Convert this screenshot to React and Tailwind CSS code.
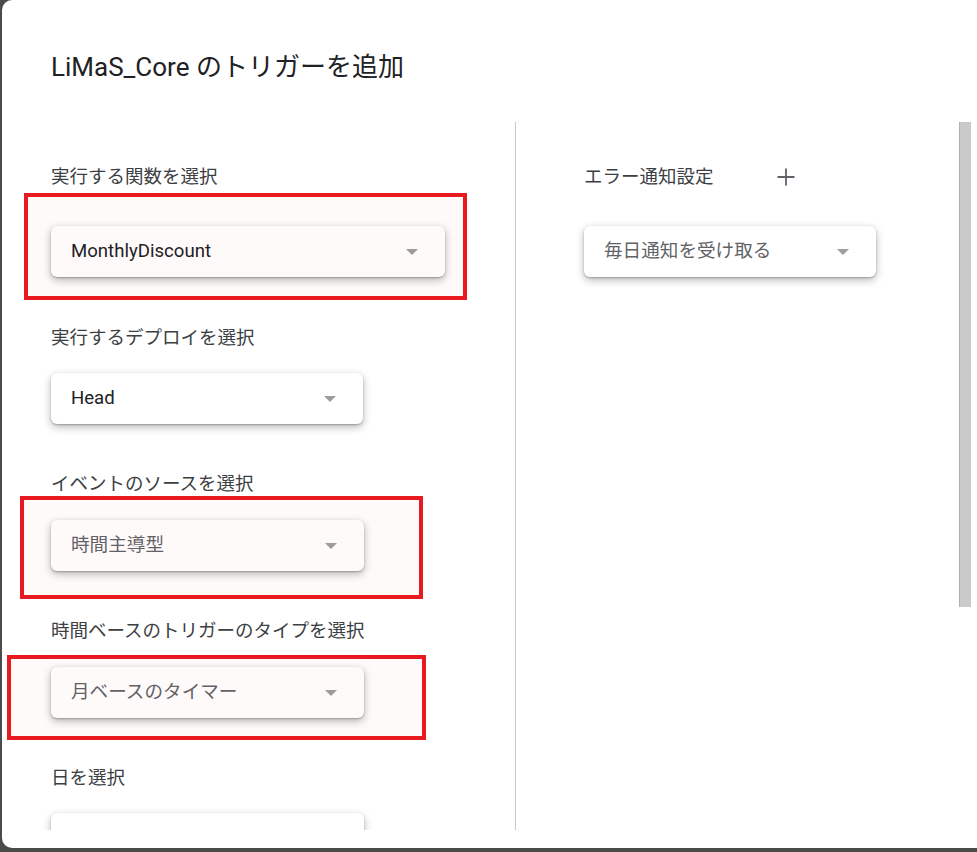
import React from "react";

const font = { fontFamily: 'Roboto, "Noto Sans CJK JP", sans-serif' };

const Select = ({ value, width, muted }) => (
  <div
    className={`${width} h-[51px] flex items-center justify-between pl-[20px] pr-[27px] bg-white rounded-[6px] shadow-[0_1px_2px_rgba(0,0,0,0.25),0_3px_8px_rgba(0,0,0,0.28)]`}
  >
    <span className={`text-[18.6px] ${muted ? "text-[#5f6368]" : "text-[#202124]"}`}>{value}</span>
    <svg width="12" height="6" viewBox="0 0 12 6">
      <path d="M0 0h12L6 6z" fill="#9e9e9e" />
    </svg>
  </div>
);

const Label = ({ children }) => (
  <div className="text-[18.5px] leading-[24px] text-[#3c4043]">{children}</div>
);

const App = () => {
  return (
    <div className="relative w-full h-[852px] bg-[#4b4b4b] pl-[2px] pb-[4px] overflow-hidden" style={font}>
      <div className="h-full bg-white rounded-l-[10px] flex flex-col">
        {/* header */}
        <div className="h-[120px] pl-[49px] pt-[51px]">
          <h1 className="text-[26px] leading-[32px] text-[#202124]">LiMaS_Core のトリガーを追加</h1>
        </div>

        {/* body */}
        <div className="flex h-[710px] overflow-hidden">
          <div className="w-[514px] border-r border-[#c8c8c8] pl-[49px] pt-[43px] mt-[2px]">
            <Label>実行する関数を選択</Label>
            <div className="mt-[37px]">
              <Select value="MonthlyDiscount" width="w-[394px]" />
            </div>

            <div className="mt-[49px]">
              <Label>実行するデプロイを選択</Label>
            </div>
            <div className="mt-[23px]">
              <Select value="Head" width="w-[312px]" />
            </div>

            <div className="mt-[48px]">
              <Label>イベントのソースを選択</Label>
            </div>
            <div className="mt-[24px]">
              <Select value="時間主導型" width="w-[313px]" muted />
            </div>

            <div className="mt-[48px]">
              <Label>時間ベースのトリガーのタイプを選択</Label>
            </div>
            <div className="mt-[24px]">
              <Select value="月ベースのタイマー" width="w-[313px]" muted />
            </div>

            <div className="mt-[48px]">
              <Label>日を選択</Label>
            </div>
            <div className="mt-[23px]">
              <Select value="" width="w-[313px]" />
            </div>
          </div>

          <div className="flex-1 flex mt-[2px]">
            <div className="flex-1 pl-[68px] pt-[43px]">
              <div className="flex items-center">
                <Label>エラー通知設定</Label>
                <svg className="ml-[62px]" width="20" height="20" viewBox="0 0 20 20">
                  <path d="M10 1.5v17M1.5 10h17" stroke="#5f6368" strokeWidth="1.8" />
                </svg>
              </div>
              <div className="mt-[37px]">
                <Select value="毎日通知を受け取る" width="w-[292px]" muted />
              </div>
            </div>
            <div className="w-[12px] h-[485px] mr-[6px] bg-[#cacaca] border-l border-[#b0b0b0]" />
          </div>
        </div>
        <div className="flex-1" />
      </div>

      {/* annotation boxes */}
      <div className="absolute left-[24px] top-[193px] w-[443px] h-[107px] border-[4px] border-[#e8191f] bg-[#e8191f]/[0.025] pointer-events-none" />
      <div className="absolute left-[20px] top-[496px] w-[403px] h-[103px] border-[4px] border-[#e8191f] bg-[#e8191f]/[0.025] pointer-events-none" />
      <div className="absolute left-[7px] top-[655px] w-[419px] h-[85px] border-[4px] border-[#e8191f] bg-[#e8191f]/[0.025] pointer-events-none" />
    </div>
  );
};

export default App;
